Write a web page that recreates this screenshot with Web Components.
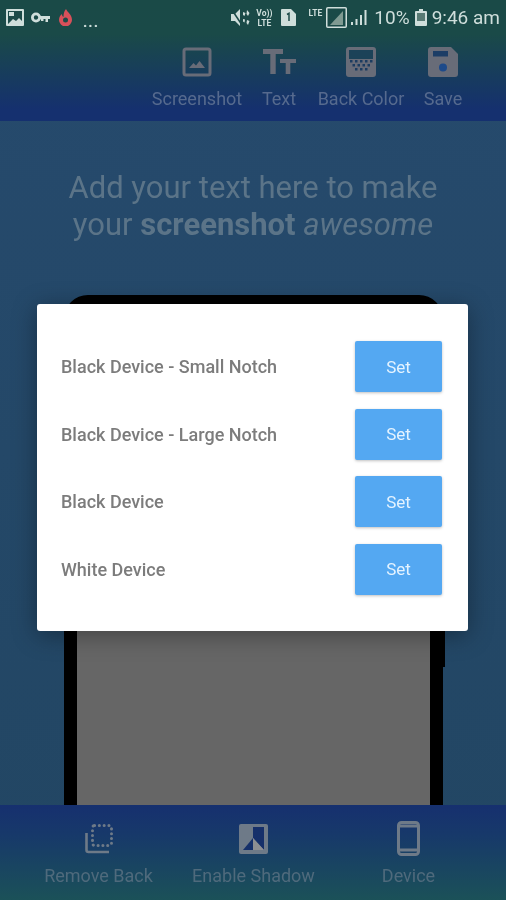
<!DOCTYPE html>
<html>
<head>
<meta charset="utf-8">
<title>Device frame</title>
<style>
  html, body { margin: 0; height: 100%; }
  body { font-family: Roboto, "Liberation Sans", sans-serif; background: #234868; }
</style>
</head>
<body>
<app-screen>
  <status-bar slot="status"></status-bar>

  <tool-bar slot="top">
    <tool-item label="Screenshot">
      <svg width="30" height="30" viewBox="0 0 30 30"><rect x="2" y="2" width="26" height="26" rx="2" fill="none" stroke="currentColor" stroke-width="3"/><path d="M7 21l4.500-5 2.500 2.500 3.500-4.500 5.500 7z" fill="currentColor"/></svg>
    </tool-item>
    <tool-item label="Text">
      <svg width="33" height="26" viewBox="0 0 33 26"><path d="M0 0h20v5h-7.300v20H7.300V5H0zM17 10h16v4h-5.700v11h-4.600V14H17z" fill="currentColor"/></svg>
    </tool-item>
    <tool-item label="Back Color">
      <svg width="30" height="30" viewBox="0 0 30 30"><rect width="30" height="30" rx="3" fill="currentColor"/><rect x="3" y="3" width="24" height="9" fill="#1c4258"/><path d="M4 13h2.500v2.500H4zM9 13h2.500v2.500H9zM14 13h2.500v2.500H14zM19 13h2.500v2.500H19zM24 13h2.500v2.500H24zM6.500 17h2.500v2.500H6.500zM11.500 17h2.500v2.500h-2.500zM16.500 17h2.500v2.500h-2.500zM21.500 17h2.500v2.500h-2.500zM9 21h2.500v2.500H9zM14 21h2.500v2.500H14zM19 21h2.500v2.500H19z" fill="#1c3c60"/></svg>
    </tool-item>
    <tool-item label="Save">
      <svg width="30" height="30" viewBox="0 0 30 30"><path d="M3 0h20l7 7v20a3 3 0 0 1-3 3H3a3 3 0 0 1-3-3V3a3 3 0 0 1 3-3z" fill="currentColor"/><rect x="5" y="4" width="15" height="5.500" fill="#1c3d66"/><circle cx="15" cy="20.500" r="4" fill="#1d4a8a"/></svg>
    </tool-item>
  </tool-bar>

  <head-line slot="headline">Add your text here to make<br>your <b>screenshot</b> <i>awesome</i></head-line>

  <device-frame slot="device"></device-frame>

  <device-dialog slot="dialog">
    <device-row>Black Device - Small Notch</device-row>
    <device-row>Black Device - Large Notch</device-row>
    <device-row>Black Device</device-row>
    <device-row>White Device</device-row>
  </device-dialog>

  <tool-bar slot="bottom" variant="bottom">
    <tool-item label="Remove Back">
      <svg width="28" height="30" viewBox="0 0 28 30"><path d="M1.500 9v17a2 2 0 0 0 2 2H24" fill="none" stroke="currentColor" stroke-width="2.600"/><rect x="7.500" y="1.500" width="19" height="20" rx="2" fill="none" stroke="currentColor" stroke-width="3" stroke-linecap="round" stroke-dasharray="0.1 4.700"/></svg>
    </tool-item>
    <tool-item label="Enable Shadow">
      <svg width="29" height="30" viewBox="0 0 29 30"><rect width="29" height="30" rx="2" fill="currentColor"/><path d="M14 3h11v23l-11-12z" fill="#16306a"/><path d="M14 14L4 26h10z" fill="#16306a"/><path d="M14 14l11 12H14z" fill="#8d8e92"/></svg>
    </tool-item>
    <tool-item label="Device">
      <svg width="23" height="35" viewBox="0 0 23 35"><rect x="1.500" y="1.500" width="20" height="32" rx="3" fill="none" stroke="currentColor" stroke-width="3"/><path d="M2 5h19M2 29h19" stroke="currentColor" stroke-width="3"/></svg>
    </tool-item>
  </tool-bar>
</app-screen>

<script>
class AppScreen extends HTMLElement {
  constructor() {
    super();
    this.attachShadow({ mode: "open" });
    this.shadowRoot.innerHTML = `
      <style>
        :host { display: flex; flex-direction: column; position: relative; width: 506px; height: 900px; overflow: hidden; background: linear-gradient(#264a6d, #224663); filter: blur(.45px); }
        .top { height: 121px; flex: none; background: linear-gradient(#1a4a47 0, #1a4a48 34px, #15306f 110px, #15306f 121px); display: flex; flex-direction: column; }
        .main { flex: 1; min-height: 0; overflow: hidden; }
        .bottom { flex: none; height: 95px; background: linear-gradient(#16306f 0, #17396a 30px, #1b5158 100%); }
        .dialog { position: absolute; left: 37px; top: 304px; }
      </style>
      <div class="top"><slot name="status"></slot><slot name="top"></slot></div>
      <div class="main"><slot name="headline"></slot><slot name="device"></slot></div>
      <div class="bottom"><slot name="bottom"></slot></div>
      <div class="dialog"><slot name="dialog"></slot></div>
    `;
  }
}

class StatusBar extends HTMLElement {
  constructor() {
    super();
    this.attachShadow({ mode: "open" });
    this.shadowRoot.innerHTML = `
      <style>
        :host { display: flex; align-items: center; height: 34px; padding: 0 6px; color: #cfdedb; font-size: 19px; flex: none; }
        svg { display: block; flex: none; }
        .dots { margin-left: 11px; align-self: flex-end; font-size: 15px; line-height: 12px; letter-spacing: 1px; padding-bottom: 6px; font-weight: 700; }
        .spacer { flex: 1; }
        .tiny { font-size: 8.500px; font-weight: 700; line-height: 10px; text-align: center; }
        .pct { margin-left: 7px; }
        .time { margin-left: 5px; }
      </style>
      <svg width="18" height="17" viewBox="0 0 18 17"><rect width="18" height="17" rx="1" fill="currentColor"/><rect x="2" y="2" width="14" height="13" fill="#1c4a48"/><path d="M2 15l5-5 3 2 3-3 3 3v3z" fill="currentColor"/><rect x="3" y="3" width="5" height="4" fill="currentColor"/></svg>
      <svg style="margin-left:7px" width="19" height="11" viewBox="0 0 19 11"><circle cx="5" cy="5.500" r="3.600" fill="none" stroke="currentColor" stroke-width="2.800"/><path d="M8 4h11v3h-2v3h-2.500V7H12.500v2H10V7H8z" fill="currentColor"/></svg>
      <svg style="margin-left:9px" width="13" height="17" viewBox="0 0 13 17"><path d="M7 0c1 3 6 5 6 11a6 6 0 0 1-13 0c0-3 1.500-5 3-6 0 1.500.5 2.500 1.500 3C4.500 5 5 2 7 0z" fill="#d8505a"/><circle cx="6.500" cy="11" r="2.500" fill="#1c4a48"/></svg>
      <span class="dots">...</span>
      <span class="spacer"></span>
      <svg width="19" height="17" viewBox="0 0 19 17"><path d="M0 5h4l5-5v17l-5-5H0z" fill="currentColor"/><path d="M1 1l10 15" stroke="#1c4a48" stroke-width="1.500"/><path d="M12 3l2.500 1-1 3-1.500-1zM16 1l2.500 3-1.500 3-1.500-2zM12 10l2 .5-.5 3-1.500-1zM16 11l2.500 1-1.500 4-1.500-2z" fill="currentColor"/></svg>
      <span class="tiny" style="margin-left:5px;width:18px;margin-top:1px">Vo))<br>LTE</span>
      <svg style="margin-left:8px" width="15" height="17" viewBox="0 0 15 17"><path d="M1 0h9l5 5v11a1 1 0 0 1-1 1H1a1 1 0 0 1-1-1V1a1 1 0 0 1 1-1z" fill="currentColor"/><path d="M6 5.500l2-1.200V12" fill="none" stroke="#1c4a48" stroke-width="1.500"/></svg>
      <span class="tiny" style="margin-left:9px;width:20px;margin-top:-8px">LTE</span>
      <svg style="margin-left:1px" width="21" height="21" viewBox="0 0 21 21"><rect x=".75" y=".75" width="19.500" height="19.500" rx="1" fill="none" stroke="currentColor" stroke-width="1.500"/><path d="M4 18L17 4v14z" fill="#7f9a92"/></svg>
      <svg style="margin-left:4px" width="16" height="15" viewBox="0 0 16 15"><path d="M0 12h2v3H0zM4.500 9h2v6h-2zM9 5h2v10H9zM13.500 0h2v15h-2z" fill="currentColor"/></svg>
      <span class="pct">10%</span>
      <svg style="margin-left:5px" width="12" height="17" viewBox="0 0 12 17"><path d="M4 0h4v2h3a1 1 0 0 1 1 1v13a1 1 0 0 1-1 1H1a1 1 0 0 1-1-1V3a1 1 0 0 1 1-1h3z" fill="currentColor"/><rect x="2" y="4" width="8" height="8" fill="#587a74"/></svg>
      <span class="time">9:46 am</span>
    `;
  }
}

class ToolBar extends HTMLElement {
  constructor() {
    super();
    this.attachShadow({ mode: "open" });
    this.shadowRoot.innerHTML = `
      <style>
        :host { display: grid; grid-template-columns: repeat(4, 82px); justify-content: end; padding: 13px 22px 0 0; color: #686c78; }
        :host([variant="bottom"]) { grid-template-columns: repeat(3, 155px); justify-content: start; padding: 15px 0 0 21px; color: #6e7a88; --label: #4f6a7c; --icon-h: 37px; --label-gap: 9px; }
      </style>
      <slot></slot>
    `;
  }
}

class ToolItem extends HTMLElement {
  constructor() {
    super();
    this.attachShadow({ mode: "open" });
    this.shadowRoot.innerHTML = `
      <style>
        :host { display: flex; flex-direction: column; align-items: center; }
        .icon { height: var(--icon-h, 30px); display: flex; align-items: center; justify-content: center; }
        .label { margin-top: var(--label-gap, 12px); font-size: 18px; line-height: 20px; color: var(--label, #566a8e); white-space: nowrap; }
        ::slotted(svg) { display: block; }
      </style>
      <div class="icon"><slot></slot></div>
      <div class="label"></div>
    `;
  }

  connectedCallback() {
    this.shadowRoot.querySelector(".label").textContent = this.getAttribute("label");
  }
}

class HeadLine extends HTMLElement {
  constructor() {
    super();
    this.attachShadow({ mode: "open" });
    this.shadowRoot.innerHTML = `
      <style>
        :host { display: block; margin-top: 48px; text-align: center; font-size: 31px; line-height: 37px; color: #5b7488; }
      </style>
      <slot></slot>
    `;
  }
}

class DeviceFrame extends HTMLElement {
  constructor() {
    super();
    this.attachShadow({ mode: "open" });
    this.shadowRoot.innerHTML = `
      <style>
        :host { display: block; position: relative; box-sizing: border-box; width: 379px; height: 520px; margin: 52px 0 0 64px; padding: 24px 13px 0; background: #000; border-radius: 24px 24px 0 0; }
        .screen { height: 100%; background: #666; }
        .side { position: absolute; right: -2px; top: 300px; width: 2px; height: 72px; background: #000; }
      </style>
      <div class="screen"></div>
      <div class="side"></div>
    `;
  }
}

class DeviceDialog extends HTMLElement {
  constructor() {
    super();
    this.attachShadow({ mode: "open" });
    this.shadowRoot.innerHTML = `
      <style>
        :host { display: flex; flex-direction: column; box-sizing: border-box; width: 431px; height: 327px; padding: 37px 26px 0 24px; gap: 16.500px; background: #fff; border-radius: 3px; box-shadow: 0 4px 24px rgba(0,0,0,.35); }
      </style>
      <slot></slot>
    `;
  }
}

class DeviceRow extends HTMLElement {
  constructor() {
    super();
    this.attachShadow({ mode: "open" });
    this.shadowRoot.innerHTML = `
      <style>
        :host { display: flex; align-items: center; justify-content: space-between; height: 51px; font-size: 18px; font-weight: 500; color: #7c7c7c; }
        button { width: 87px; height: 51px; border: 0; border-radius: 2px; background: #54a8f2; color: #e4f3ff; font: 400 17px Roboto, "Liberation Sans", sans-serif; box-shadow: 0 1px 3px rgba(0,0,0,.25); }
      </style>
      <span><slot></slot></span>
      <button>Set</button>
    `;
  }
}

customElements.define("app-screen", AppScreen);
customElements.define("status-bar", StatusBar);
customElements.define("tool-bar", ToolBar);
customElements.define("tool-item", ToolItem);
customElements.define("head-line", HeadLine);
customElements.define("device-frame", DeviceFrame);
customElements.define("device-dialog", DeviceDialog);
customElements.define("device-row", DeviceRow);
</script>
</body>
</html>
